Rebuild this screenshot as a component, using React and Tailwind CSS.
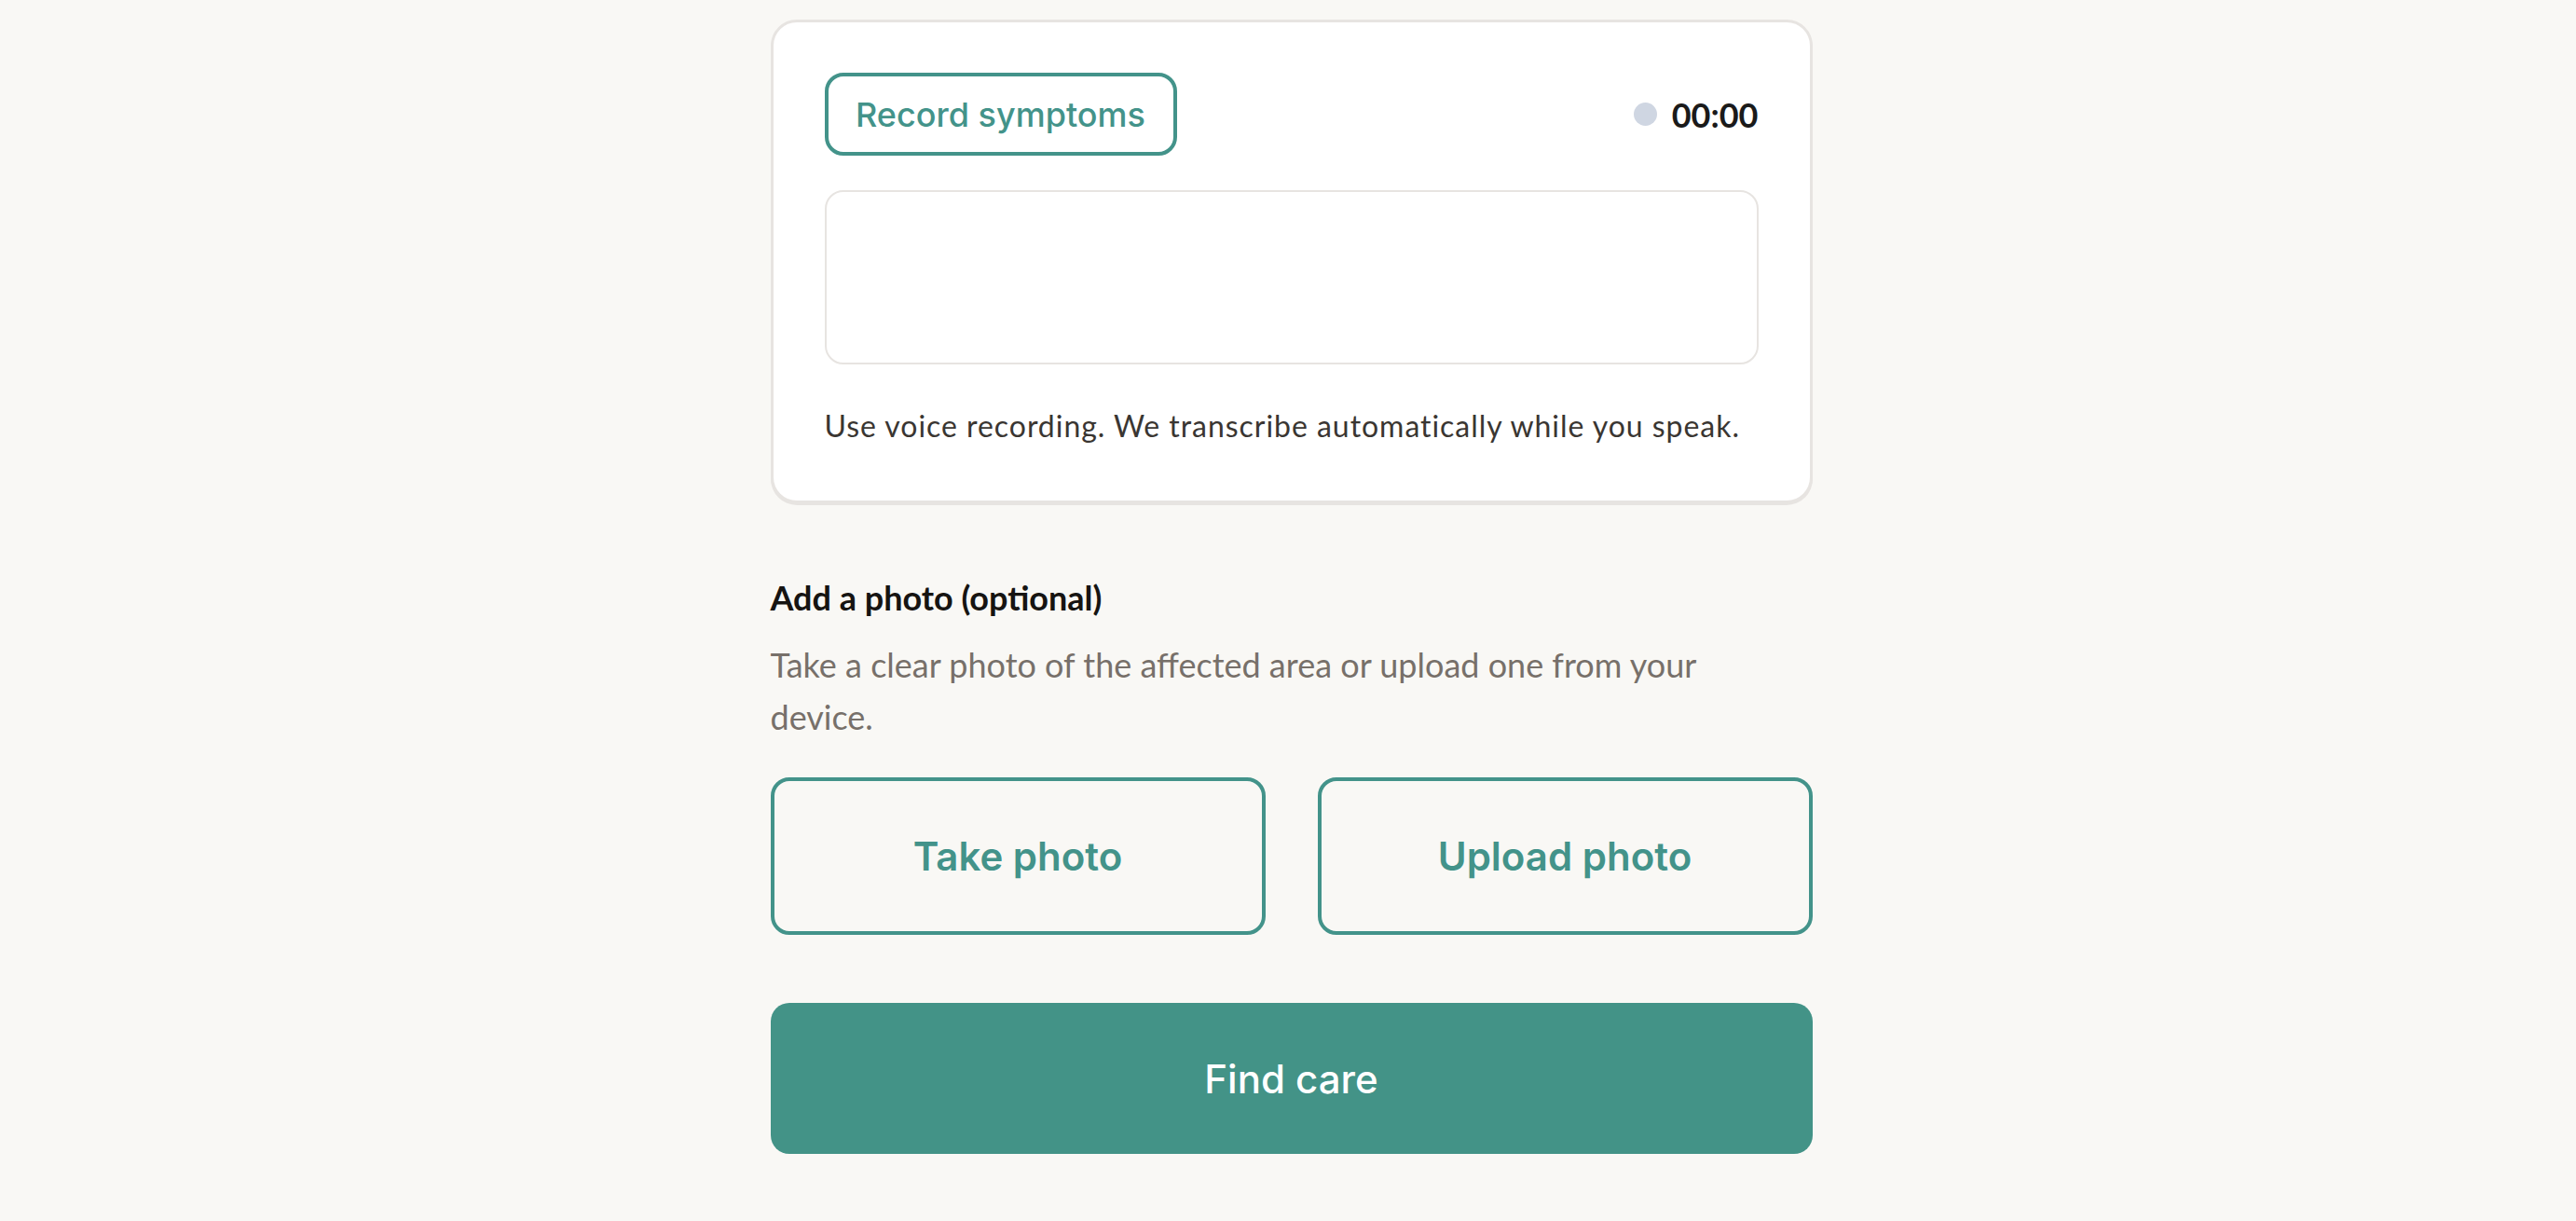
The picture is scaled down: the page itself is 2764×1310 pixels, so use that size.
export default function App() {
  return (
    <div className="min-h-screen bg-[#f9f8f5] pt-[21px] pb-[72px] pl-[7px]" style={{ fontFamily: 'Lato, "Noto Sans", sans-serif' }}>
      <div className="mx-auto w-[1118px]">
        {/* voice card */}
        <div className="rounded-[28px] border-[3px] border-[#e7e4e1] bg-white px-[55px] pt-[54px] pb-[56px] shadow-[0_2px_0_#e7e4e1]">
          <div className="flex items-center justify-between">
            <button className="h-[89px] w-[378px] rounded-[20px] border-4 border-[#43938a] text-[36px] font-medium text-[#43938a]" style={{ fontFamily: 'Inter, sans-serif' }}>
              Record symptoms
            </button>
            <div className="flex items-center gap-[16px]">
              <span className="h-[25px] w-[25px] rounded-full bg-[#cfd6e2]" />
              <span className="text-[36px] font-bold text-[#1a1a1a]">00:00</span>
            </div>
          </div>
          <div className="mt-[37px] h-[187px] rounded-[20px] border-2 border-[#e7e4e1] bg-white" />
          <p className="mt-[42px] text-[32px] leading-[48px] tracking-[0.03em] text-[#3a3632]">
            Use voice recording. We transcribe automatically while you speak.
          </p>
        </div>

        {/* photo */}
        <h3 className="mt-[73px] text-[36px] leading-[56px] font-bold text-[#161412]">Add a photo (optional)</h3>
        <p className="mt-[16px] max-w-[1030px] text-[36px] leading-[56px] text-[#77706a]">
          Take a clear photo of the affected area or upload one from your device.
        </p>
        <div className="mt-[37px] grid grid-cols-2 gap-[56px]" style={{ fontFamily: 'Inter, sans-serif' }}>
          <button className="h-[169px] rounded-[20px] border-4 border-[#43938a] text-[42px] font-semibold text-[#43938a]">
            Take photo
          </button>
          <button className="h-[169px] rounded-[20px] border-4 border-[#43938a] text-[42px] font-semibold text-[#43938a]">
            Upload photo
          </button>
        </div>
        <button className="mt-[73px] h-[162px] w-full rounded-[20px] bg-[#439387] text-[42px] font-medium text-white" style={{ fontFamily: 'Inter, sans-serif' }}>
          Find care
        </button>
      </div>
    </div>
  )
}
